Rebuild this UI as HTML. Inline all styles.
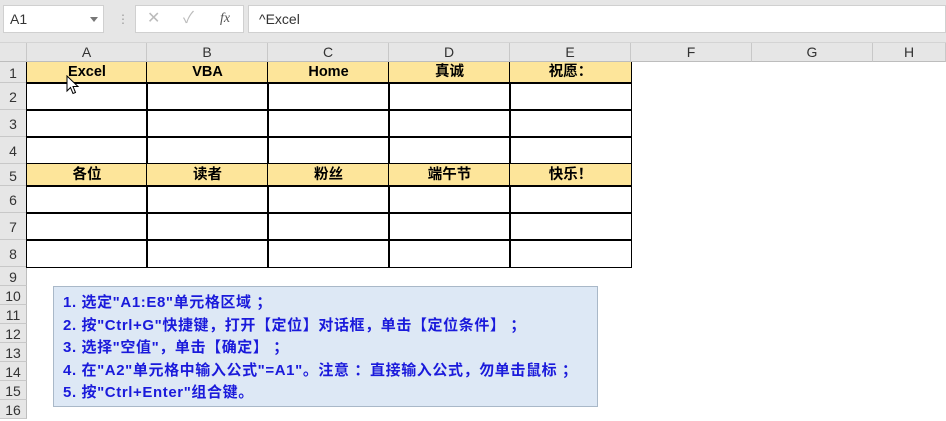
<!DOCTYPE html><html><head><meta charset="utf-8"><style>
*{margin:0;padding:0;box-sizing:border-box}
body{width:946px;height:419px;overflow:hidden;background:#fff;font-family:"Liberation Sans","Noto Sans CJK SC",sans-serif;position:relative}
.a{position:absolute}
.top{left:0;top:0;width:946px;height:43px;background:#e6e6e6;border-bottom:1px solid #d4d4d4}
.ch{top:43px;height:19px;background:#e6e6e6;border-right:1px solid #c8c8c8;border-bottom:1px solid #bdbdbd;text-align:center;font-size:14px;line-height:19px;color:#333}
.rh{left:0;width:27px;background:#e6e6e6;border-right:1px solid #bdbdbd;border-bottom:1px solid #c8c8c8;text-align:center;font-size:14px;color:#333}
.c{border:1px solid #000;text-align:center;font-weight:bold;font-size:14.5px;color:#000}
.y{background:#fde59a}
</style></head><body>
<div class="a top"></div>
<div class="a" style="left:3px;top:5px;width:101px;height:28px;background:#fff;border:1px solid #d0d0d0;font-size:14px;line-height:26px;padding-left:6px;color:#333">A1<span class="a" style="left:86px;top:11px;border:4px solid transparent;border-top:5px solid #777"></span></div>
<div class="a" style="left:117px;top:12px;color:#999;font-size:12px">⋮</div>
<div class="a" style="left:135px;top:5px;width:109px;height:28px;background:#fff;border:1px solid #d0d0d0;color:#bbb;font-size:16px;line-height:26px"><span class="a" style="left:11px">✕</span><span class="a" style="left:47px">✓</span><span class="a" style="left:84px;color:#555;font-style:italic;font-family:'Liberation Serif',serif;font-size:14px">fx</span></div>
<div class="a" style="left:248px;top:5px;width:698px;height:28px;background:#fff;border:1px solid #d0d0d0;font-size:14px;line-height:26px;padding-left:10px;color:#333">^Excel</div>
<div class="a ch" style="left:0;width:27px"></div>
<div class="a ch" style="left:27px;width:120px">A</div>
<div class="a ch" style="left:147px;width:121px">B</div>
<div class="a ch" style="left:268px;width:121px">C</div>
<div class="a ch" style="left:389px;width:121px">D</div>
<div class="a ch" style="left:510px;width:121px">E</div>
<div class="a ch" style="left:631px;width:121px">F</div>
<div class="a ch" style="left:752px;width:121px">G</div>
<div class="a ch" style="left:873px;width:73px">H</div>
<div id="rows"></div>
<div class="a" style="left:53px;top:286px;width:545px;height:121px;background:#dde8f5;border:1px solid #a9b8c8;color:#1a1adb;font-weight:bold;font-size:15px;letter-spacing:0.6px;line-height:22.6px;padding:5px 0 0 9px;white-space:nowrap">1. 选定"A1:E8"单元格区域 ；<br>2. 按"Ctrl+G"快捷键，打开【定位】对话框，单击【定位条件】 ；<br>3. 选择"空值"，单击【确定】 ；<br>4. 在"A2"单元格中输入公式"=A1"。注意 ：直接输入公式，勿单击鼠标 ；<br>5. 按"Ctrl+Enter"组合键。</div>
<svg class="a" style="left:66px;top:75px" width="14" height="20" viewBox="0 0 14 20"><path d="M1 1 L1 16 L4.5 12.5 L7 18.5 L9.5 17.5 L7 11.5 L12 11.5 Z" fill="#fff" stroke="#000" stroke-width="1"/></svg>
<script>
var rt=[62,83,110,137,164,186,213,240,267,286,305,324,343,362,381,400,419];
var h='';
for(var i=0;i<16;i++){h+='<div class="a rh" style="top:'+rt[i]+'px;height:'+(rt[i+1]-rt[i])+'px;line-height:'+(rt[i+1]-rt[i]+2)+'px">'+(i+1)+'</div>';}
var cx=[27,147,268,389,510,631];
var t1=['Excel','VBA','Home','真诚','祝愿：'],t5=['各位','读者','粉丝','端午节','快乐！'];
for(var r=0;r<8;r++)for(var c=0;c<5;c++){var y=(r==0||r==4);var tx=r==0?t1[c]:(r==4?t5[c]:'');
h+='<div class="a c'+(y?' y':'')+'" style="left:'+(cx[c]-1)+'px;top:'+(rt[r]-1)+'px;width:'+(cx[c+1]-cx[c]+2)+'px;height:'+(rt[r+1]-rt[r]+2)+'px;line-height:'+(rt[r+1]-rt[r])+'px;'+(r==0?'border-top-width:0;top:'+rt[r]+'px;height:'+(rt[r+1]-rt[r]+1)+'px;':'')+'">'+tx+'</div>';}
document.getElementById('rows').innerHTML=h;
</script>
</body></html>
